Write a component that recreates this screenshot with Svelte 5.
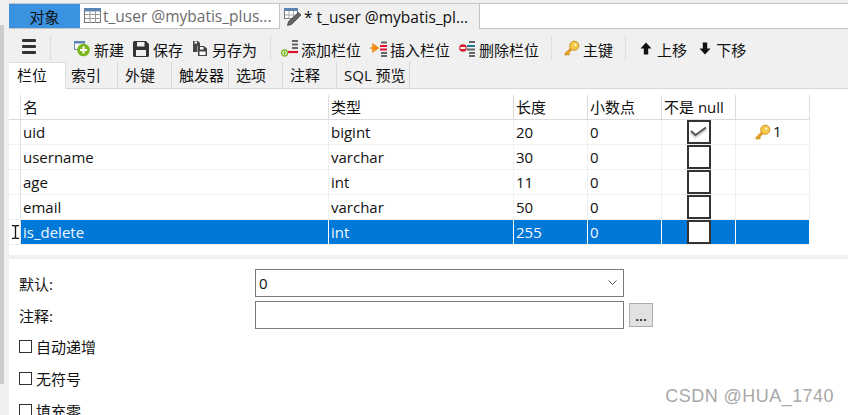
<script lang="ts">
  const cols = [
    { key: 'name', label: '名' },
    { key: 'type', label: '类型' },
    { key: 'len', label: '长度' },
    { key: 'dec', label: '小数点' },
    { key: 'notNull', label: '不是 null' },
    { key: 'pk', label: '' },
  ]

  const rows = [
    { name: 'uid', type: 'bigint', len: '20', dec: '0', notNull: true, pk: '1' },
    { name: 'username', type: 'varchar', len: '30', dec: '0', notNull: false, pk: '' },
    { name: 'age', type: 'int', len: '11', dec: '0', notNull: false, pk: '' },
    { name: 'email', type: 'varchar', len: '50', dec: '0', notNull: false, pk: '' },
    { name: 'is_delete', type: 'int', len: '255', dec: '0', notNull: false, pk: '', selected: true },
  ]

  const tabs = ['栏位', '索引', '外键', '触发器', '选项', '注释', 'SQL 预览']
  const checks = ['自动递增', '无符号', '填充零']
</script>

{#snippet keyIcon(size)}
  <svg width={size} height={size} viewBox="0 0 16 16">
    <path d="M7 7.600 1.400 13.200l1.500 1.500 1.200-1.200 1 .8 1-1-.7-1 2.400-2.400z" fill="#e8a317" stroke="#b97c0c" stroke-width=".6" />
    <circle cx="10.600" cy="5.400" r="4.300" fill="#f7c948" stroke="#c48a10" stroke-width=".8" />
    <circle cx="11.600" cy="4.400" r="1.200" fill="#fff3c4" />
  </svg>
{/snippet}

<div class="window">
  <div class="strip"><div class="scroll-thumb"></div></div>

  <div class="main">
    <div class="tabbar">
      <div class="wintab wintab--object">对象</div>
      <div class="wintab wintab--table">
        <svg width="18" height="16" viewBox="0 0 18 16">
          <rect x=".5" y=".5" width="16" height="14" fill="#fff" stroke="#777" />
          <rect x="0" y="0" width="17" height="3.400" fill="#5b84b1" />
          <path d="M6 3v12M11.500 3v12M1 6.500h16M1 10.500h16" stroke="#999" fill="none" />
        </svg>
        <span>t_user @mybatis_plus...</span>
      </div>
      <div class="wintab wintab--active">
        <svg width="18" height="18" viewBox="0 0 18 18">
          <rect x=".5" y=".5" width="13" height="10" fill="#fff" stroke="#777" />
          <rect x="0" y="0" width="14" height="3" fill="#5b84b1" />
          <path d="M5 3v8M9.500 3v8M1 7h12" stroke="#aaa" fill="none" />
          <path d="M14.500 4.500 17 7 7.500 16.500l-4 1 1-4z" fill="#666" stroke="#333" stroke-width=".7" />
        </svg>
        <span>* t_user @mybatis_pl...</span>
      </div>
      <div class="tabbar__rest"></div>
    </div>

    <div class="toolbar">
      <button class="menu" type="button" aria-label="菜单">
        <span></span><span></span><span></span>
      </button>
      <i class="sep sep--first"></i>

      <div class="tool tool--new">
        <svg width="16" height="17" viewBox="0 0 16 17">
          <rect x=".5" y="1.500" width="10" height="8" fill="#fff" stroke="#6f8fb5" />
          <rect x="0" y="1" width="11" height="2.500" fill="#5b84b1" />
          <circle cx="9.500" cy="10" r="6.300" fill="#7ab51d" />
          <path d="M9.500 6.500v7M6 10h7" stroke="#fff" stroke-width="2.200" />
        </svg>
        新建
      </div>
      <div class="tool tool--save">
        <svg width="16" height="16" viewBox="0 0 16 16">
          <path d="M0 1.500A1.500 1.500 0 0 1 1.500 0H13l3 3v11.500a1.500 1.500 0 0 1-1.500 1.500h-13A1.500 1.500 0 0 1 0 14.500z" fill="#333" />
          <rect x="4" y="1" width="7.500" height="4.500" fill="#f0f0f0" />
          <rect x="3" y="9" width="10" height="6" fill="#f0f0f0" />
        </svg>
        保存
      </div>
      <div class="tool tool--saveas">
        <svg width="16" height="17" viewBox="0 0 16 17">
          <path d="M1 1h5l2 2v3H5.500v6H1z" fill="#444" />
          <rect x="2.500" y="1.500" width="2.500" height="2" fill="#fff" />
          <path d="M6 6h6l3 2.500V16H6z" fill="#444" />
          <rect x="8" y="7" width="3.500" height="2.500" fill="#fff" />
          <rect x="7.500" y="11.500" width="6" height="3.500" fill="#fff" />
        </svg>
        另存为
      </div>
      <i class="sep sep--mid"></i>

      <div class="tool tool--add">
        <svg width="18" height="17" viewBox="0 0 18 17">
          <path d="M11 1h6M11 4.500h6M11 8h6" stroke="#666" stroke-width="2" />
          <path d="M7 12h10" stroke="#e0102f" stroke-width="2.200" />
          <circle cx="3.500" cy="13" r="3" fill="#fff" stroke="#7ab51d" stroke-width="1.400" />
          <path d="M3.500 11.300v3.400M1.800 13h3.400" stroke="#7ab51d" stroke-width="1.200" />
        </svg>
        添加栏位
      </div>
      <div class="tool tool--insert">
        <svg width="17" height="16" viewBox="0 0 17 16">
          <path d="M11 1.500h6M11 12h6M11 15h6" stroke="#666" stroke-width="2" />
          <path d="M10 5h7M10 8.500h7" stroke="#e0102f" stroke-width="2" />
          <path d="M0 7h4M3 3.500 8 7l-5 3.500z" fill="#f28c13" stroke="#f28c13" stroke-width="1.600" />
        </svg>
        插入栏位
      </div>
      <div class="tool tool--delete">
        <svg width="16" height="16" viewBox="0 0 16 16">
          <path d="M10 1h6M10 12h6M10 15h6" stroke="#666" stroke-width="2" />
          <path d="M8 5h8" stroke="#1b7f9c" stroke-width="2" />
          <path d="M8 8.500h8" stroke="#666" stroke-width="2" />
          <circle cx="4" cy="7" r="3.800" fill="#d81e2c" />
          <rect x="1.500" y="6" width="5" height="2" fill="#fff" />
        </svg>
        删除栏位
      </div>
      <i class="sep sep--key"></i>

      <div class="tool tool--key">
        {@render keyIcon(17)}
        主键
      </div>
      <i class="sep sep--move"></i>

      <div class="tool tool--up">
        <svg width="12" height="13" viewBox="0 0 12 13"><path d="M6 .5 11.500 6.500H8.200V12.500H3.800V6.500H.5z" fill="#111" /></svg>
        上移
      </div>
      <div class="tool tool--down">
        <svg width="12" height="13" viewBox="0 0 12 13"><path d="M6 12.500 11.500 6.500H8.200V.5H3.800V6.500H.5z" fill="#111" /></svg>
        下移
      </div>
    </div>

    <div class="tabs">
      {#each tabs as t, i}
        <div class="tab tab--{i}" class:tab--on={i === 0}>{t}</div>
      {/each}
    </div>

    <div class="grid-wrap">
      <div class="grid">
        <div class="stub stub--head"></div>
        {#each cols as c}
          <div class="cell cell--head">{c.label}</div>
        {/each}

        {#each rows as r}
          <div class="stub"></div>
          <div class="cell" class:sel={r.selected}>{r.name}</div>
          <div class="cell" class:sel={r.selected}>{r.type}</div>
          <div class="cell" class:sel={r.selected}>{r.len}</div>
          <div class="cell" class:sel={r.selected}>{r.dec}</div>
          <div class="cell cell--check" class:sel={r.selected}>
            <span class="box">
              {#if r.notNull}
                <svg width="19" height="16" viewBox="0 0 19 16">
                  <path d="M2 8 6.500 12.500 17 5" fill="none" stroke="#d8d8d8" stroke-width="3.500" />
                  <path d="M2 7 6.500 11 17 3.500" fill="none" stroke="#555" stroke-width="1.800" />
                </svg>
              {/if}
            </span>
          </div>
          <div class="cell cell--pk" class:sel={r.selected}>
            {#if r.pk}
              {@render keyIcon(17)}<span>{r.pk}</span>
            {/if}
          </div>
        {/each}
      </div>
    </div>

    <div class="band"></div>

    <div class="form">
      <div class="field">
        <span class="field__label">默认:</span>
        <div class="input">
          <span>0</span>
          <svg width="9" height="6" viewBox="0 0 9 6"><path d="M.5.500 4.500 4.500 8.500.5" fill="none" stroke="#555" /></svg>
        </div>
      </div>
      <div class="field">
        <span class="field__label">注释:</span>
        <div class="input"></div>
        <div class="more">...</div>
      </div>
      <div class="checks">
        {#each checks as c}
          <div class="check"><span class="check__box"></span>{c}</div>
        {/each}
      </div>
    </div>
  </div>

  <svg class="cursor" width="7" height="14" viewBox="0 0 7 14">
    <path d="M0 .5h2.500L3.500 1.500 4.500.5H7M3.500 1.500v11M0 13.500h2.500l1-1 1 1H7" fill="none" stroke="#111" stroke-width="1.300" />
  </svg>
  <div class="watermark">CSDN @HUA_1740</div>
</div>

<style>
  :global(body) {
    margin: 0;
    background: #fff;
  }

  .window {
    position: relative;
    display: flex;
    width: 848px;
    height: 415px;
    overflow: hidden;
    background: #fff;
    color: #111;
    font-family: "Open Sans", "Noto Sans CJK SC", sans-serif;
    font-size: 15px;
  }

  .strip {
    width: 9px;
    flex-shrink: 0;
    background: #f0f0f0;
    padding-top: 25px;
    box-sizing: border-box;
  }

  .scroll-thumb {
    width: 4px;
    height: 359px;
    background: #cdcdcd;
  }

  .main {
    flex: 1;
    min-width: 0;
    display: flex;
    flex-direction: column;
    background: #fff;
  }

  .main > div {
    flex-shrink: 0;
  }

  /* window tabs */
  .tabbar {
    display: flex;
    height: 26px;
    padding-top: 3px;
    background: #f0f0f0;
  }

  .wintab {
    display: flex;
    align-items: center;
    flex-shrink: 0;
    box-sizing: border-box;
    white-space: nowrap;
    font-size: 15.5px;
    border-top: 1px solid #c4c4c4;
    border-bottom: 1px solid #c4c4c4;
  }

  .wintab svg {
    flex-shrink: 0;
  }

  .wintab--object {
    width: 71px;
    justify-content: center;
    background: #3a92e0;
    color: #111;
    font-size: 15px;
  }

  .wintab--table {
    width: 199px;
    padding-left: 4px;
    gap: 1px;
    color: #6b6b6b;
    background: #fff;
  }

  .wintab--active {
    width: 201px;
    padding-left: 4px;
    gap: 2px;
    background: #f0f0f0;
    border-left: 1px solid #c4c4c4;
    border-right: 1px solid #c4c4c4;
    border-bottom: 0;
  }

  .tabbar__rest {
    flex: 1;
    background: #fff;
    border-top: 1px solid #c4c4c4;
    border-bottom: 1px solid #c4c4c4;
  }

  /* toolbar */
  .toolbar {
    display: flex;
    align-items: center;
    height: 37px;
    background: #f0f0f0;
    padding-left: 13px;
  }

  .menu {
    display: flex;
    flex-direction: column;
    gap: 3px;
    width: 14px;
    padding: 0;
    margin: -2px 0 0;
    border: 0;
    background: none;
  }

  .menu span {
    display: block;
    height: 3px;
    border-radius: 1px;
    background: #333;
  }

  .sep {
    width: 1px;
    height: 24px;
    background: #ddd;
    flex-shrink: 0;
  }

  .sep--first { margin: 0 23px 0 14px; }
  .sep--mid { margin: 0 10px 0 13px; }
  .sep--key { margin: 0 11px 0 12px; }
  .sep--move { margin: 0 14px 0 12px; }

  .tool {
    display: flex;
    align-items: center;
    gap: 4px;
    white-space: nowrap;
    margin-top: 4px;
    line-height: 20px;
  }

  .tool svg {
    flex-shrink: 0;
    margin-top: -2px;
  }

  .tool--new { margin-right: 9px; }
  .tool--save { margin-right: 9px; }
  .tool--add { margin-right: 9px; gap: 2px; }
  .tool--insert { margin-right: 9px; gap: 3px; }
  .tool--key { gap: 3px; }
  .tool--up { gap: 5px; margin-right: 12px; }
  .tool--down { gap: 5px; }

  /* sub tabs */
  .tabs {
    display: flex;
    height: 27px;
    margin-top: -4px;
    box-sizing: border-box;
    background: #f0f0f0;
    border-bottom: 1px solid #d8d8d8;
  }

  .tab {
    box-sizing: border-box;
    padding-left: 7px;
    line-height: 27px;
    white-space: nowrap;
    background: #f0f0f0;
    border-right: 1px solid #d8d8d8;
  }

  .tab--on {
    height: 27px;
    padding-left: 8px;
    background: #fff;
    border-top: 1px solid #ddd;
    border-right: 1px solid #ddd;
    line-height: 24px;
  }

  .tab--0 { width: 57px; }
  .tab--1 { width: 52px; padding-left: 5px; }
  .tab--2 { width: 54px; }
  .tab--3 { width: 57px; }
  .tab--4 { width: 54px; }
  .tab--5 { width: 54px; }
  .tab--6 { width: 73px; }

  /* fields grid */
  .grid-wrap {
    padding-top: 6px;
    height: 166px;
    box-sizing: border-box;
  }

  .grid {
    display: grid;
    grid-template-columns: 12px 308px 185px 74px 74px 74px 74px;
    grid-auto-rows: 25px;
    width: 801px;
    line-height: 25px;
  }

  .stub {
    box-sizing: border-box;
    border-right: 1px solid #e0e0e0;
    border-bottom: 1px solid #f0f0f0;
  }

  .stub--head {
    border-bottom: 1px solid #dcdcdc;
  }

  .cell {
    box-sizing: border-box;
    padding-left: 2px;
    border-right: 1px solid #f0f0f0;
    border-bottom: 1px solid #f0f0f0;
    white-space: nowrap;
    overflow: hidden;
  }

  .cell--head {
    border-right-color: #dcdcdc;
    border-bottom-color: #dcdcdc;
  }

  .cell--check {
    display: flex;
    justify-content: center;
    padding-left: 0;
  }

  .cell--pk {
    display: flex;
    align-items: center;
    gap: 2px;
    padding-left: 18px;
  }

  .cell--pk span {
    margin-top: -2px;
  }

  .sel {
    background: #0078d7;
    color: #f2f7fc;
    border-right-color: #fff;
  }

  .box {
    box-sizing: border-box;
    display: flex;
    align-items: center;
    justify-content: center;
    width: 24px;
    height: 24px;
    background: #fff;
    border: 2px solid #333;
  }

  .band {
    height: 4px;
    background: #f0f0f0;
  }

  /* form */
  .form {
    padding: 10px 0 0 9px;
  }

  .field {
    display: flex;
    align-items: center;
    height: 28px;
    margin-bottom: 4px;
  }

  .field__label {
    box-sizing: border-box;
    width: 237px;
    padding-left: 1px;
    flex-shrink: 0;
  }

  .input {
    box-sizing: border-box;
    width: 369px;
    height: 28px;
    border: 1px solid #7a7a7a;
    background: #fff;
    display: flex;
    align-items: center;
    justify-content: space-between;
    padding: 0 6px 0 3px;
  }

  .more {
    box-sizing: border-box;
    width: 24px;
    height: 24px;
    margin-left: 5px;
    background: #e1e1e1;
    border: 1px solid #adadad;
    text-align: center;
    line-height: 24px;
    font-size: 14px;
    font-weight: 600;
  }

  .checks {
    display: flex;
    flex-direction: column;
    gap: 11px;
    margin-top: 7px;
  }

  .check {
    display: flex;
    align-items: center;
    gap: 4px;
    height: 21px;
  }

  .check__box {
    box-sizing: border-box;
    width: 13px;
    height: 13px;
    margin-left: 1px;
    border: 1px solid #333;
    background: #fff;
  }

  .cursor {
    position: absolute;
    left: 12px;
    top: 225px;
  }

  .watermark {
    position: absolute;
    right: 14px;
    top: 386px;
    font-family: "Liberation Sans", sans-serif;
    font-size: 18px;
    letter-spacing: .45px;
    color: #a8a8a8;
  }
</style>
